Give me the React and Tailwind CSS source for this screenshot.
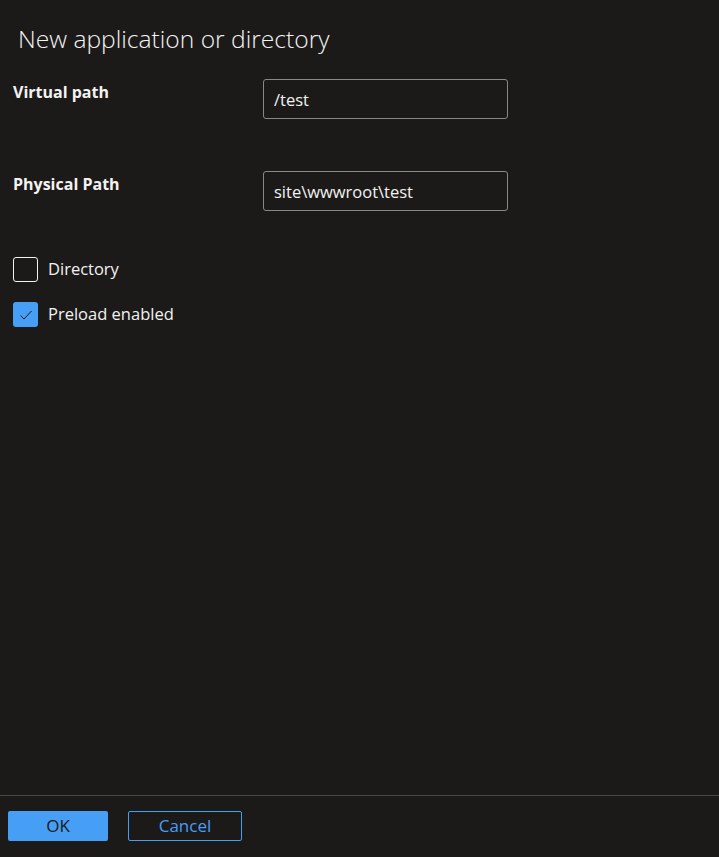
import React from 'react'

const font = { fontFamily: '"Segoe UI", "Open Sans", "Noto Sans", sans-serif' }

function Field({ label, value }) {
  return (
    <div className="flex items-start h-[92px]">
      <div className="w-[263px] pl-[13px] pt-[1px] text-[16px] font-bold text-[#f3f2f1]">{label}</div>
      <input
        defaultValue={value}
        className="w-[245px] h-[40px] rounded-[3px] border border-[#8a8886] bg-[#1b1a19] px-[10px] text-[16.5px] text-[#f3f2f1] outline-none"
      />
    </div>
  )
}

function Check({ label, checked }) {
  return (
    <label className="flex items-center gap-[10px] pl-[13px] h-[25px]">
      <span
        className={`w-[25px] h-[25px] rounded-[3px] flex items-center justify-center ${
          checked ? 'bg-[#479ef5]' : 'border border-[#f3f2f1]'
        }`}
      >
        {checked && (
          <svg width="16" height="16" viewBox="0 0 16 16" fill="none">
            <path d="M2.5 8.5 L6 12 L13.5 4" stroke="#1b1a19" strokeWidth="1" />
          </svg>
        )}
      </span>
      <span className="text-[16.5px] text-[#f3f2f1]">{label}</span>
    </label>
  )
}

export default function App() {
  return (
    <div style={font} className="w-[719px] h-[857px] bg-[#1b1a19] flex flex-col">
      <div className="flex-1">
        <h1 className="pl-[18px] pt-[21px] h-[79px] text-[24.6px] font-light text-[#f3f2f1] leading-[36px]">
          New application or directory
        </h1>
        <Field label="Virtual path" value="/test" />
        <Field label="Physical Path" value="site\wwwroot\test" />
        <div className="flex flex-col gap-[20px] mt-[-6px]">
          <Check label="Directory" />
          <Check label="Preload enabled" checked />
        </div>
      </div>
      <div className="border-t border-[#484644] h-[62px] flex items-start gap-[20px] pl-[8px] pt-[15px]">
        <button className="w-[100px] h-[30px] rounded-[2px] bg-[#479ef5] text-[17px] text-[#1b1a19]">OK</button>
        <button className="w-[114px] h-[30px] rounded-[2px] border border-[#479ef5] text-[17px] text-[#479ef5]">Cancel</button>
      </div>
    </div>
  )
}
